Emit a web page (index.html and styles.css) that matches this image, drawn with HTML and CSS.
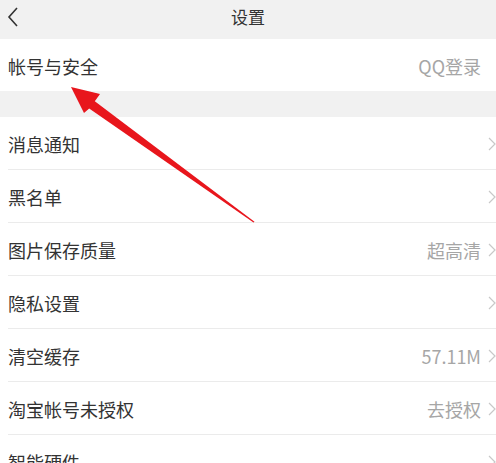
FILE: index.html
```html
<!DOCTYPE html>
<html lang="zh-CN">
<head>
    <meta charset="UTF-8">
    <meta name="viewport" content="width=device-width, initial-scale=1.0">
    <title>设置</title>
    <link rel="stylesheet" href="styles.css">
</head>
<body>
    <div class="page">
        <div class="topbar">
            <svg class="back" width="12" height="20" viewBox="0 0 12 20"><path d="M10 1 L2 10 L10 19" fill="none" stroke="#333" stroke-width="1.6"/></svg>
            <span class="title">设置</span>
            <span></span>
        </div>

        <div class="group">
            <div class="row first">
                <span class="label">帐号与安全</span>
                <span class="value">QQ登录</span>
                <span class="chev"></span>
            </div>
        </div>

        <div class="group gap">
            <div class="row first"><span class="label">消息通知</span><span class="value"></span><svg class="chev" viewBox="0 0 8 14"><path d="M1 1 L7 7 L1 13" /></svg></div>
            <div class="row"><span class="label">黑名单</span><span class="value"></span><svg class="chev" viewBox="0 0 8 14"><path d="M1 1 L7 7 L1 13" /></svg></div>
            <div class="row"><span class="label">图片保存质量</span><span class="value">超高清</span><svg class="chev" viewBox="0 0 8 14"><path d="M1 1 L7 7 L1 13" /></svg></div>
            <div class="row"><span class="label">隐私设置</span><span class="value"></span><svg class="chev" viewBox="0 0 8 14"><path d="M1 1 L7 7 L1 13" /></svg></div>
            <div class="row"><span class="label">清空缓存</span><span class="value">57.11M</span><svg class="chev" viewBox="0 0 8 14"><path d="M1 1 L7 7 L1 13" /></svg></div>
            <div class="row"><span class="label">淘宝帐号未授权</span><span class="value">去授权</span><svg class="chev" viewBox="0 0 8 14"><path d="M1 1 L7 7 L1 13" /></svg></div>
            <div class="row"><span class="label">智能硬件</span><span class="value"></span><svg class="chev" viewBox="0 0 8 14"><path d="M1 1 L7 7 L1 13" /></svg></div>
        </div>

        <!-- red pointer drawn over the screen -->
        <svg class="arrow" width="496" height="463" viewBox="0 0 496 463">
            <defs>
                <filter id="soft" x="-10%" y="-10%" width="120%" height="120%">
                    <feGaussianBlur stdDeviation="0.7"/>
                </filter>
            </defs>
            <polygon filter="url(#soft)" fill="#e8141c"
                points="71,87 100,94 94.8,101.2 254.5,221.8 253.5,222.6 89.2,108.6 84,113"/>
        </svg>
    </div>
</body>
</html>
```

FILE: styles.css
```css
body{
    margin: 0;
    background-color: #f1f1f1;
    font-family: "Noto Sans CJK SC", "Noto Sans", sans-serif;
    color: #333;
}
.page{
    position: relative;
    width: 496px;
    height: 463px;
    overflow: hidden;
}
.topbar{
    display: grid;
    grid-template-columns: 40px 1fr 40px;
    align-items: center;
    height: 39px;
    background-color: #f1f1f1;
}
.back{
    margin-left: 7px;
    margin-top: -6px;
}
.title{
    text-align: center;
    font-size: 17px;
    margin-top: -6px;
    color: #333;
}
.group{
    background-color: #fff;
}
.gap{
    margin-top: 26px;
}
.row{
    display: flex;
    align-items: center;
    height: 53px;
    margin-left: 8px;
    border-top: 1px solid #ebebeb;
    box-sizing: border-box;
    padding-top: 2px;
}
.row.first{
    border-top: none;
    height: 52px;
}
.label{
    flex: 1;
    font-size: 18px;
}
.value{
    font-size: 18px;
    color: #a6a6a6;
}
.chev{
    width: 8px;
    height: 14px;
    margin-left: 7px;
    flex-shrink: 0;
}
.chev path{
    fill: none;
    stroke: #c8c8c8;
    stroke-width: 1.2;
}
.arrow{
    position: absolute;
    left: 0;
    top: 0;
    pointer-events: none;
}
```
